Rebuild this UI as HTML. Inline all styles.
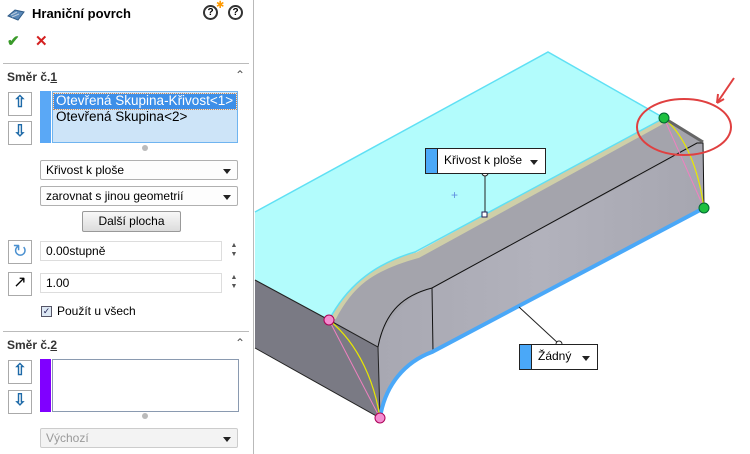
<!DOCTYPE html>
<html><head><meta charset="utf-8"><style>
*{margin:0;padding:0;box-sizing:border-box}
body{width:750px;height:454px;overflow:hidden;background:#fff;font-family:"Segoe UI","Liberation Sans",sans-serif;font-size:12px;color:#000;position:relative}
.a{position:absolute}
#panel{left:0;top:0;width:254px;height:454px;background:#fff;border-right:1px solid #b9b9b9}
.sel{border:1px solid #b0b0b0;background:#fdfdfd;border-radius:2px;height:20px;padding:2px 5px;font-size:12px}
.dd:after{content:"";position:absolute;right:6px;top:8px;border-left:4px solid transparent;border-right:4px solid transparent;border-top:5px solid #222}
.btn{border:1px solid #999;background:linear-gradient(#f8f8f8,#dcdcdc);border-radius:2px;text-align:center}
.ib{border:1px solid #aaa;width:24px;height:24px;background:#fff}
.inp{border:1px solid #ddd;height:20px;padding:2px 5px;background:#fff}
.spin{width:16px;height:20px;color:#555;font-size:7px;line-height:9px;text-align:center}
</style></head><body>
<div id="panel" class="a">
 <svg class="a" style="left:6px;top:7px" width="20" height="16"><path d="M2 9 L9 3 L18 5 L12 13 Z" fill="#5a88b8" stroke="#2e5a86"/><path d="M5 8 L11 5 M6 10 L13 7" stroke="#bcd" /></svg>
 <div class="a" style="left:32px;top:6px;font-weight:bold;font-size:13px">Hraniční povrch</div>
 <div class="a" style="left:203px;top:5px;width:15px;height:15px;border:2px solid #333;border-radius:50%;font-size:10px;font-weight:bold;text-align:center;line-height:11px">?</div>
 <div class="a" style="left:216px;top:0px;color:#f90;font-size:10px">✱</div>
 <div class="a" style="left:228px;top:5px;width:15px;height:15px;border:2px solid #333;border-radius:50%;font-size:10px;font-weight:bold;text-align:center;line-height:11px">?</div>
 <div class="a" style="left:7px;top:32px;color:#3a9a2a;font-size:15px;font-weight:bold">✔</div>
 <div class="a" style="left:35px;top:32px;color:#d42020;font-size:15px;font-weight:bold">✕</div>
 <div class="a" style="left:3px;top:63px;width:246px;height:1px;background:#bbb"></div>
 <div class="a" style="left:7px;top:70px;font-weight:bold;color:#333">Směr č.<u>1</u></div>
 <div class="a" style="left:235px;top:68px;font-size:12px;color:#555">⌃</div>
 <div class="a ib" style="left:8px;top:92px;color:#1e6aa8;font-size:16px;text-align:center;line-height:20px;font-weight:bold">⇧</div>
 <div class="a ib" style="left:8px;top:121px;color:#1e6aa8;font-size:16px;text-align:center;line-height:20px;font-weight:bold">⇩</div>
 <div class="a" style="left:40px;top:91px;width:11px;height:52px;background:#5aa8f6"></div>
 <div class="a" style="left:52px;top:91px;width:186px;height:52px;background:#cde4f8;border:1px solid #6fb4f0"></div>
 <div class="a" style="left:54px;top:94px;width:182px;height:15px;background:#3d8fe8;color:#fff;padding-left:2px;line-height:14px;outline:1px dotted #c85;font-size:13.5px">Otevřená Skupina-Křivost&lt;1&gt;</div>
 <div class="a" style="left:56px;top:109px;line-height:15px;font-size:13.5px">Otevřená Skupina&lt;2&gt;</div>
 <div class="a" style="left:142px;top:145px;width:6px;height:6px;border-radius:50%;background:#bbb"></div>
 <div class="a sel dd" style="left:40px;top:160px;width:198px">Křivost k ploše</div>
 <div class="a sel dd" style="left:40px;top:186px;width:198px">zarovnat s jinou geometrií</div>
 <div class="a btn" style="left:82px;top:211px;width:99px;height:21px;line-height:19px">Další plocha</div>
 <div class="a ib" style="left:8px;top:240px;color:#4a90d0;font-size:18px;text-align:center;line-height:20px">↻</div>
 <div class="a inp" style="left:40px;top:241px;width:182px">0.00stupně</div>
 <div class="a spin" style="left:226px;top:241px">▲<br>▼</div>
 <div class="a ib" style="left:8px;top:272px;font-size:16px;text-align:center;line-height:20px">↗</div>
 <div class="a inp" style="left:40px;top:273px;width:182px">1.00</div>
 <div class="a spin" style="left:226px;top:273px">▲<br>▼</div>
 <div class="a" style="left:41px;top:306px;width:11px;height:11px;border:1px solid #556;background:#dde8f4;font-size:9px;line-height:9px;color:#225;text-align:center">✓</div>
 <div class="a" style="left:57px;top:304px">Použít u všech</div>
 <div class="a" style="left:3px;top:331px;width:246px;height:1px;background:#bbb"></div>
 <div class="a" style="left:7px;top:338px;font-weight:bold;color:#333">Směr č.<u>2</u></div>
 <div class="a" style="left:235px;top:336px;font-size:12px;color:#555">⌃</div>
 <div class="a ib" style="left:8px;top:360px;color:#1e6aa8;font-size:16px;text-align:center;line-height:20px;font-weight:bold">⇧</div>
 <div class="a ib" style="left:8px;top:390px;color:#1e6aa8;font-size:16px;text-align:center;line-height:20px;font-weight:bold">⇩</div>
 <div class="a" style="left:40px;top:359px;width:11px;height:53px;background:#8000ff"></div>
 <div class="a" style="left:52px;top:359px;width:187px;height:53px;background:#fff;border:1px solid #8a9ab0"></div>
 <div class="a" style="left:142px;top:413px;width:6px;height:6px;border-radius:50%;background:#bbb"></div>
 <div class="a sel dd" style="left:40px;top:428px;width:198px;color:#999;background:#f3f3f3;border-color:#ccc">Výchozí</div>
</div>
<svg class="a" style="left:0;top:0" width="750" height="454">
 <defs><linearGradient id="fr" x1="0" y1="0" x2="1" y2="0"><stop offset="0" stop-color="#a8a8b2"/><stop offset=".5" stop-color="#b2b2bc"/><stop offset="1" stop-color="#a6a6b0"/></linearGradient></defs>
 <path d="M255 348 L380 418 L378 347 L329 320 L255 280 Z" fill="#7a7a84"/>
 <path d="M378 347 C385 310 410 295 432 288 L697 143 L703 143 L704 208 L432 352 C400 365 385 390 380 418 Z" fill="url(#fr)"/>
 <path d="M329 320 C345 290 360 270 415 255 L664 118 L703 142 L432 288 C405 297 385 320 378 347 Z" fill="#a4a4ac"/>
 <path d="M333 318 C350 285 370 268 418 255 L664 120" stroke="#cfcfa8" stroke-width="6" fill="none"/>
 <path d="M255 212 L548 52 L664 118 L415 252 C370 265 345 290 329 320 L255 280 Z" fill="#b2fcfc"/>
 <path d="M255 212 L548 52 L664 118 M664 118 L415 252 C370 265 345 290 329 320" stroke="#5fe0f4" stroke-width="1.5" fill="none"/>
 <path d="M255 280 L329 320 L378 347 L380 418 L255 348" stroke="#222" fill="none"/>
 <path d="M378 347 C385 310 405 295 432 288 L697 143 L703 143 L704 208" stroke="#111" fill="none"/>
 <path d="M432 288 L433 352" stroke="#111"/>
 <path d="M380 418 C385 385 405 362 432 352 L704 208" stroke="#4aa8f8" stroke-width="4" fill="none"/>
 <path d="M329 320 L380 418 M664 118 L704 208" stroke="#f080c0" stroke-width="1"/>
 <path d="M329 320 C360 345 375 385 380 418 M664 118 C690 140 700 180 704 208" stroke="#e8e800" stroke-width="1.2" fill="none"/>
 <path d="M664 118 L703 142" stroke="#666" stroke-width="3"/>
 <circle cx="329" cy="320" r="5" fill="#f48cd0" stroke="#a05"/>
 <circle cx="380" cy="418" r="5" fill="#f48cd0" stroke="#a05"/>
 <circle cx="664" cy="118" r="5" fill="#1ec040" stroke="#063"/>
 <circle cx="704" cy="208" r="5" fill="#1ec040" stroke="#063"/>
 <ellipse cx="684" cy="127" rx="47" ry="28" fill="none" stroke="#e04040" stroke-width="2"/>
 <path d="M734 78 L717 103 M717 103 L718 94 M717 103 L724 99" stroke="#e04040" stroke-width="2" fill="none"/>
 <path d="M485 173 L485 215 M519 307 L559 344" stroke="#222" stroke-width="1"/>
 <circle cx="485" cy="173" r="3" fill="#fff" stroke="#222"/>
 <rect x="482" y="212" width="5" height="5" fill="#fff" stroke="#225"/>
 <circle cx="559" cy="344" r="3" fill="#fff" stroke="#222"/>
 <text x="451" y="199" fill="#6090e0" font-size="12">+</text>
</svg>
<div class="a" style="left:425px;top:148px;width:121px;height:26px;border:1px solid #222;background:#fff">
 <div class="a" style="left:0;top:0;width:12px;height:24px;background:#4aa8f8;border-right:1px solid #222"></div>
 <div class="a" style="left:18px;top:4px">Křivost k ploše</div>
 <div class="a" style="left:104px;top:11px;border-left:4px solid transparent;border-right:4px solid transparent;border-top:5px solid #222"></div>
</div>
<div class="a" style="left:519px;top:344px;width:79px;height:26px;border:1px solid #222;background:#fff">
 <div class="a" style="left:0;top:0;width:12px;height:24px;background:#4aa8f8;border-right:1px solid #222"></div>
 <div class="a" style="left:18px;top:4px">Žádný</div>
 <div class="a" style="left:62px;top:11px;border-left:4px solid transparent;border-right:4px solid transparent;border-top:5px solid #222"></div>
</div>
</body></html>
